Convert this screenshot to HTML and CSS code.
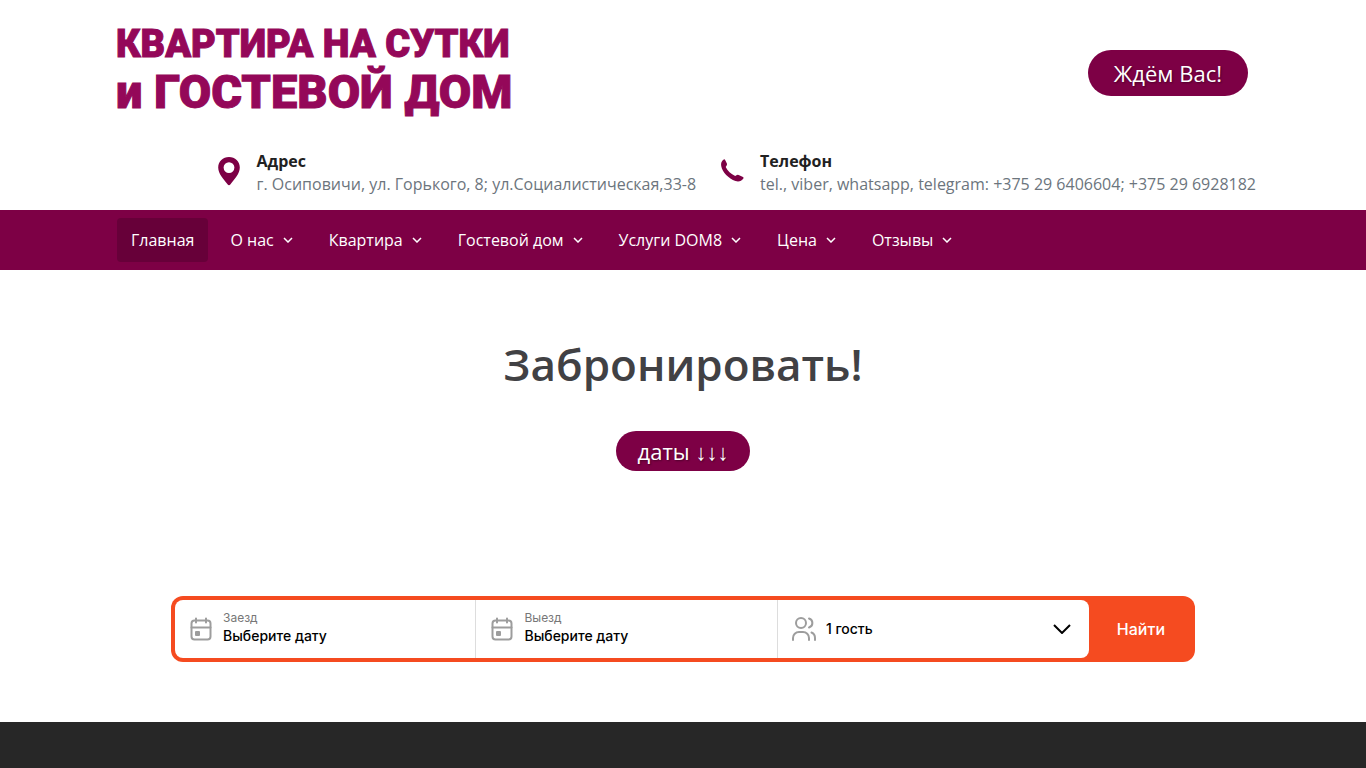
FILE: index.html
```html
<!DOCTYPE html>
<html lang="ru">
<head>
    <meta charset="UTF-8">
    <meta name="viewport" content="width=device-width, initial-scale=1.0">
    <title>Квартира на сутки и гостевой дом</title>
    <link rel="stylesheet" href="styles.css">
</head>
<body>
    <header>
        <div class="container header-top">
            <a class="logo" href="#">
                <span class="logo-line">КВАРТИРА НА СУТКИ</span>
                <span class="logo-line logo-big">и ГОСТЕВОЙ ДОМ</span>
            </a>
            <button class="btn" type="button">Ждём Вас!</button>
        </div>
        <div class="container contacts">
            <div class="contact">
                <svg class="contact-icon" viewBox="0 0 30 30">
                    <path fill-rule="evenodd" d="M15 1C8.900 1 4.200 5.500 4.200 11.500C4.200 18 9.500 22.500 13.500 28.300Q15 30 16.500 28.300C20.500 22.500 25.800 18 25.800 11.500C25.800 5.500 21.100 1 15 1ZM15 6.200a5.400 5.400 0 1 1 0 10.800a5.400 5.400 0 0 1 0-10.800Z"/>
                </svg>
                <div>
                    <div class="contact-title">Адрес</div>
                    <div class="contact-text">г. Осиповичи, ул. Горького, 8; ул.Социалистическая,33-8</div>
                </div>
            </div>
            <div class="contact">
                <svg class="contact-icon" viewBox="0 0 30 30">
                    <path d="M6.700 3.500Q7.600 2.800 8 3.800L9.900 7.400Q10.300 8.800 9.500 9.700L8.700 10.900C10.500 14.500 14 18 18.200 20L19.900 19.100Q20.900 18.500 22.200 19.200L26 21Q27 21.600 26.400 22.400C24.500 24.800 22 26.300 18.500 25C11.500 22.500 5.500 16.500 4.200 10C3.700 7 4.500 5.200 6.700 3.500Z"/>
                </svg>
                <div>
                    <div class="contact-title">Телефон</div>
                    <div class="contact-text">tel., viber, whatsapp, telegram: +375 29 6406604; +375 29 6928182</div>
                </div>
            </div>
        </div>
        <nav class="navbar">
            <div class="container menu">
                <a class="menu-link active" href="#">Главная</a>
                <a class="menu-link" href="#">О нас<svg class="arrow" viewBox="0 0 10 6"><path d="M1 1l4 4 4-4"/></svg></a>
                <a class="menu-link" href="#">Квартира<svg class="arrow" viewBox="0 0 10 6"><path d="M1 1l4 4 4-4"/></svg></a>
                <a class="menu-link" href="#">Гостевой дом<svg class="arrow" viewBox="0 0 10 6"><path d="M1 1l4 4 4-4"/></svg></a>
                <a class="menu-link" href="#">Услуги DOM8<svg class="arrow" viewBox="0 0 10 6"><path d="M1 1l4 4 4-4"/></svg></a>
                <a class="menu-link" href="#">Цена<svg class="arrow" viewBox="0 0 10 6"><path d="M1 1l4 4 4-4"/></svg></a>
                <a class="menu-link" href="#">Отзывы<svg class="arrow" viewBox="0 0 10 6"><path d="M1 1l4 4 4-4"/></svg></a>
            </div>
        </nav>
    </header>

    <main>
        <h1>Забронировать!</h1>
        <a class="btn btn-small" href="#booking">даты ↓↓↓</a>

        <form class="booking" id="booking">
            <div class="fields">
                <div class="field">
                    <svg class="field-icon" viewBox="0 0 26 26">
                        <rect x="3.500" y="4.500" width="19" height="19" rx="3"/>
                        <path d="M3.500 11.500h19M8 2.500v4M18 2.500v4"/>
                        <rect class="dot" x="7" y="15" width="5" height="5" rx="1"/>
                    </svg>
                    <div class="field-body">
                        <label for="date-in">Заезд</label>
                        <input id="date-in" type="text" value="Выберите дату" readonly>
                    </div>
                </div>
                <div class="field">
                    <svg class="field-icon" viewBox="0 0 26 26">
                        <rect x="3.500" y="4.500" width="19" height="19" rx="3"/>
                        <path d="M3.500 11.500h19M8 2.500v4M18 2.500v4"/>
                        <rect class="dot" x="7" y="15" width="5" height="5" rx="1"/>
                    </svg>
                    <div class="field-body">
                        <label for="date-out">Выезд</label>
                        <input id="date-out" type="text" value="Выберите дату" readonly>
                    </div>
                </div>
                <div class="field guests">
                    <svg class="field-icon" viewBox="0 0 26 26">
                        <circle cx="10" cy="7" r="5"/>
                        <path d="M2 24v-2a6 6 0 0 1 6-6h4a6 6 0 0 1 6 6v2M18 2.500c4.500 1.500 4.500 7.500 0 9M20.500 16.500c2.500 1 3.500 3 3.500 5.500v2"/>
                    </svg>
                    <select aria-label="Количество гостей">
                        <option>1 гость</option>
                        <option>2 гостя</option>
                        <option>3 гостя</option>
                    </select>
                    <svg class="select-arrow" viewBox="0 0 18 10"><path d="M1 1l8 8 8-8"/></svg>
                </div>
            </div>
            <button class="search" type="submit">Найти</button>
        </form>
    </main>

    <footer></footer>
</body>
</html>
```
FILE: styles.css
```css
* {
    box-sizing: border-box;
}
body {
    display: flex;
    flex-direction: column;
    min-height: 100vh;
    margin: 0;
    font-family: "Open Sans", "Noto Sans", sans-serif;
    font-size: 16px;
    color: #212121;
    background-color: #fff;
}
a {
    text-decoration: none;
}
.container {
    max-width: 1140px;
    margin: 0 auto;
}
.header-top {
    display: flex;
    align-items: center;
    justify-content: space-between;
    padding: 25px 5px 15px 3px;
}
.logo {
    color: #940859;
    font-family: Roboto, sans-serif;
    font-weight: 900;
    white-space: nowrap;
    -webkit-text-stroke: 1px #940859;
}
.logo-line {
    display: block;
    font-size: 38px;
    line-height: 38px;
}
.logo-big {
    font-size: 47px;
    line-height: 58px;
}
.btn {
    padding: 0 26px;
    border: none;
    border-radius: 23px;
    background-color: #7d0045;
    color: #fff;
    font-family: inherit;
    font-size: 22px;
    line-height: 46px;
    text-shadow: 1px 1px 2px rgba(0, 0, 0, 0.4);
    cursor: pointer;
}
.btn-small {
    padding: 0 22px;
    line-height: 40px;
}
.contacts {
    display: flex;
    justify-content: flex-end;
    gap: 21px;
    max-width: 1146px;
    padding: 14px 0;
    white-space: nowrap;
}
.contact {
    display: flex;
    gap: 13px;
    line-height: 23px;
}
.contact-icon {
    width: 30px;
    height: 30px;
    margin-top: 6px;
    fill: #7d0045;
}
.contact-title {
    font-weight: 700;
}
.contact-text {
    color: #6c757d;
}
.navbar {
    background-color: #7d0045;
}
.menu {
    display: flex;
    gap: 8px;
    padding: 8px 4px;
}
.menu-link {
    display: flex;
    align-items: center;
    gap: 9px;
    padding: 0 14px;
    border-radius: 4px;
    color: #fff;
    line-height: 44px;
}
.menu-link.active {
    background-color: #670039;
}
.arrow {
    width: 10px;
    height: 6px;
    fill: none;
    stroke: #fff;
    stroke-width: 1.5;
}
main {
    display: flex;
    flex-direction: column;
    align-items: center;
    padding: 60px 20px;
}
h1 {
    margin: 0 0 33px;
    color: #414144;
    font-size: 44px;
    font-weight: 600;
    line-height: 68px;
}
.booking {
    display: flex;
    width: 100%;
    max-width: 1024px;
    margin-top: 125px;
    padding: 4px;
    border-radius: 12px;
    background-color: #f54b20;
    font-family: Inter, sans-serif;
}
.fields {
    display: flex;
    flex: 1;
    height: 58px;
    border-radius: 8px;
    background-color: #fff;
}
.field {
    display: flex;
    flex: 1;
    align-items: center;
    gap: 9px;
    padding: 0 18px 0 13px;
    border-right: 1px solid #ddd;
}
.field:last-child {
    border-right: none;
}
.field-icon {
    flex: none;
    width: 26px;
    height: 26px;
    fill: none;
    stroke: #9d9d9d;
    stroke-width: 2;
    stroke-linecap: round;
}
.field-icon .dot {
    fill: #9d9d9d;
    stroke: none;
}
.field-body {
    flex: 1;
    min-width: 0;
    padding-bottom: 2px;
}
label {
    display: block;
    color: #777;
    font-size: 12px;
    line-height: 16px;
}
input,
select {
    display: block;
    width: 100%;
    padding: 0;
    border: none;
    background: none;
    color: #000;
    font-family: inherit;
    font-size: 14px;
    font-weight: 500;
    line-height: 20px;
    appearance: none;
}
.guests {
    flex: 0 0 311px;
}
.select-arrow {
    flex: none;
    width: 18px;
    height: 10px;
    fill: none;
    stroke: #000;
    stroke-width: 2;
}
.search {
    padding: 0 26px 0 28px;
    border: none;
    background: none;
    color: #fff;
    font-family: inherit;
    font-size: 16px;
    font-weight: 500;
    cursor: pointer;
}
footer {
    flex: 1;
    background-color: #272727;
}
```
